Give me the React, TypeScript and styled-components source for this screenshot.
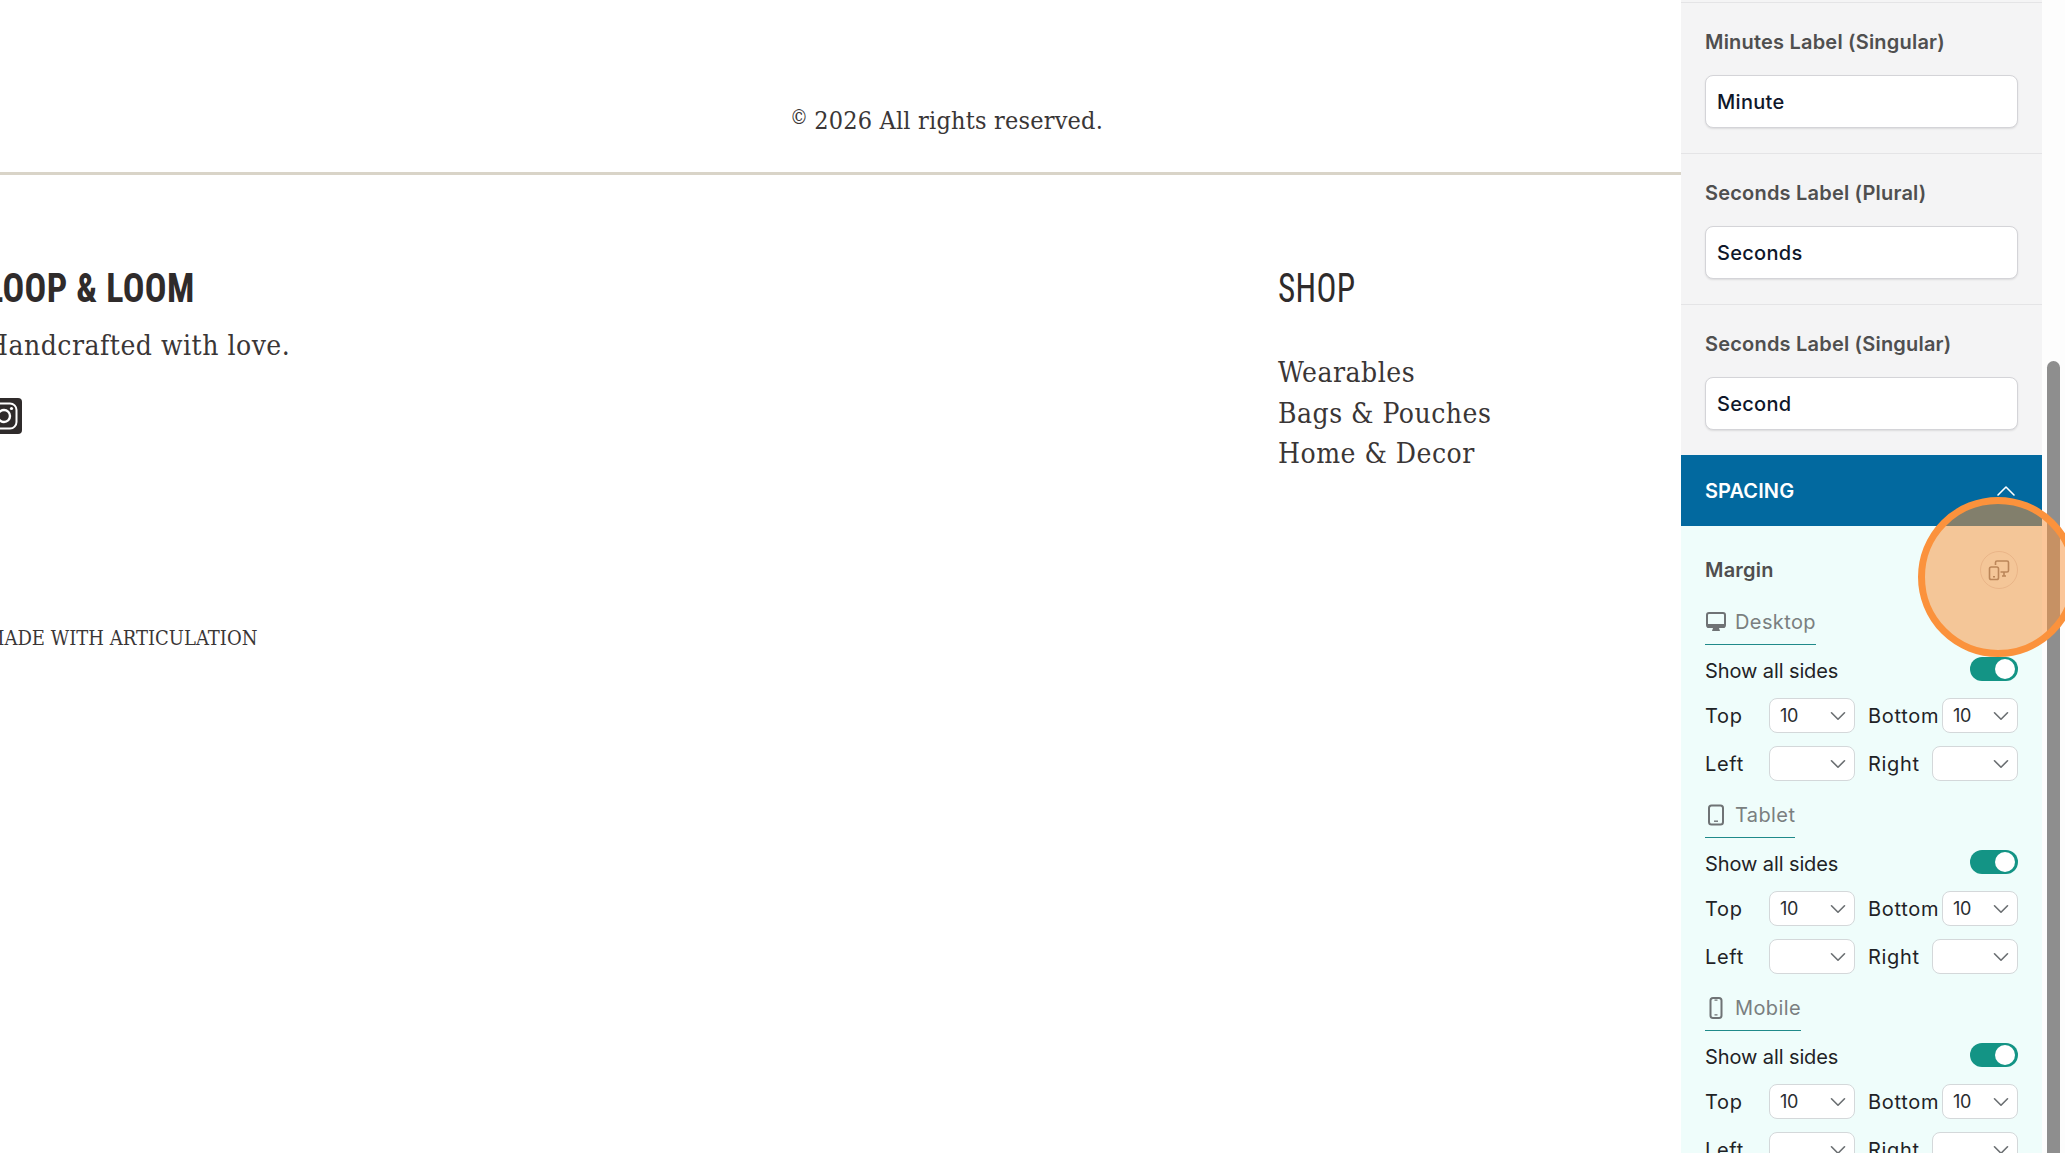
import { FC } from "react";
import styled, { createGlobalStyle } from "styled-components";
import { ChevronDown, ChevronUp } from "lucide-react";

const GlobalStyle = createGlobalStyle`
  html, body {
    margin: 0;
    height: 100%;
    background: #fff;
    overflow: hidden;
  }
  #root {
    height: 100%;
  }
`;

const Page = styled.div`
  position: relative;
  display: flex;
  width: 2065px;
  height: 1153px;
  overflow: hidden;
`;

const Main = styled.main`
  width: 1681px;
  flex-shrink: 0;
  color: #3a3636;
  font-family: "DejaVu Serif Condensed", "DejaVu Serif", serif;
`;

const CopyrightBar = styled.div`
  height: 175px;
  box-sizing: border-box;
  padding: 97px 0 0 212px;
  text-align: center;
  border-bottom: 3px solid #d9d4c8;
`;

const Copyright = styled.p`
  margin: 0;
  font-size: 25px;
  line-height: 40px;
  letter-spacing: 0.2px;
`;

const CopyrightMark = styled.span`
  font-size: 20px;
  vertical-align: 5px;
  margin-right: 6px;
`;

const Footer = styled.footer`
  display: grid;
  grid-template-columns: 1292px 1fr;
  margin-left: -14px;
  padding-top: 89px;
`;

const Brand = styled.div`
  display: flex;
  flex-direction: column;
  align-items: flex-start;
`;

const Heading = styled.h3<{ $bold?: boolean }>`
  margin: 0;
  color: #2f2b2b;
  font-family: "Roboto", "Liberation Sans", sans-serif;
  font-stretch: 75%;
  font-size: 41px;
  line-height: 48px;
  font-weight: ${(p) => (p.$bold ? 700 : 400)};
  letter-spacing: 0.4px;
  transform: scaleX(${(p) => (p.$bold ? 0.88 : 0.81)});
  transform-origin: left center;
`;

const Tagline = styled.p`
  margin: 14px 0 0;
  font-size: 28px;
  line-height: 40px;
  letter-spacing: 0.5px;
`;

const SocialLink = styled.a`
  display: block;
  margin-top: 32px;
  width: 36px;
  height: 36px;
`;

const MadeWith = styled.p`
  margin: 190px 0 0;
  font-size: 20px;
  line-height: 28px;
`;

const ShopLinks = styled.ul`
  list-style: none;
  margin: 41px 0 0;
  padding: 0;
  font-size: 28px;
  line-height: 40.5px;
  letter-spacing: 0.5px;
`;

const Sidebar = styled.aside`
  flex: 1;
  display: flex;
  background: #fdfdfd;
`;

const Panel = styled.div`
  width: 361px;
  flex-shrink: 0;
  height: 1153px;
  box-sizing: border-box;
  padding-top: 2px;
  overflow: hidden;
  background: #f4f4f5;
  font-family: "Inter", "Noto Sans", sans-serif;
`;

const ScrollTrack = styled.div`
  flex: 1;
  padding: 361px 5px 0;
`;

const ScrollThumb = styled.div`
  width: 13px;
  height: 792px;
  background: #8e8e8e;
  border-radius: 7px 7px 0 0;
`;

const TextField = styled.div`
  height: 151px;
  box-sizing: border-box;
  padding: 25px 24px 0;
  border-top: 1px solid #e4e4e6;
`;

const FieldLabel = styled.div`
  font-size: 20px;
  line-height: 28px;
  font-weight: 600;
  letter-spacing: 0.2px;
  color: #4f4f4f;
`;

const FieldInput = styled.div`
  margin-top: 19px;
  height: 53px;
  box-sizing: border-box;
  padding: 0 11px;
  display: flex;
  align-items: center;
  background: #fff;
  border: 1px solid #d4d4d8;
  border-radius: 8px;
  box-shadow: 0 1px 2px rgba(0, 0, 0, 0.1);
  font-size: 20px;
  font-weight: 500;
  letter-spacing: 0.3px;
  color: #0f172a;
`;

const SectionHeader = styled.div`
  height: 71px;
  box-sizing: border-box;
  padding: 0 20px 0 24px;
  display: flex;
  align-items: center;
  justify-content: space-between;
  background: #02699f;
  color: #fff;
  font-size: 20px;
  font-weight: 600;
  letter-spacing: 0.1px;
`;

const SectionBody = styled.div`
  padding: 0 24px;
  background: #effdfb;
`;

const MarginRow = styled.div`
  height: 65px;
  display: flex;
  align-items: flex-end;
  justify-content: space-between;
  padding-bottom: 7px;
  box-sizing: border-box;
`;

const ResponsiveButton = styled.button`
  width: 38px;
  height: 38px;
  margin-bottom: -5px;
  padding: 0;
  display: flex;
  align-items: center;
  justify-content: center;
  background: transparent;
  border: 1px solid #d8d8d8;
  border-radius: 50%;
  color: #777;
`;

const DeviceBlock = styled.section`
  height: 193px;
`;

const DeviceTab = styled.div`
  display: inline-flex;
  align-items: center;
  gap: 8px;
  height: 47px;
  margin-top: 7px;
  padding-top: 2px;
  box-sizing: border-box;
  border-bottom: 1.5px solid #1f8a8a;
  font-size: 20px;
  letter-spacing: 0.4px;
  color: #7a7f80;
`;

const ToggleRow = styled.div`
  height: 24px;
  margin-top: 12px;
  display: flex;
  align-items: flex-start;
  justify-content: space-between;
  font-size: 20px;
  line-height: 28px;
  letter-spacing: -0.1px;
  color: #1f2326;
`;

const ToggleTrack = styled.span`
  position: relative;
  display: block;
  width: 48px;
  height: 24px;
  background: #139485;
  border-radius: 12px;
`;

const ToggleKnob = styled.span`
  position: absolute;
  top: 2px;
  right: 3px;
  width: 20px;
  height: 20px;
  background: #fff;
  border-radius: 50%;
`;

const SidesGrid = styled.div`
  margin-top: 17px;
  display: grid;
  grid-template-columns: 64px 86px 13px 1fr;
  row-gap: 13px;
  align-items: center;
  font-size: 20px;
  letter-spacing: 0.7px;
  color: #1f2326;
`;

const SideCellEnd = styled.div`
  grid-column: 4;
  display: flex;
  align-items: center;
  justify-content: space-between;
`;

const SelectBox = styled.div<{ $width: number }>`
  width: ${(p) => p.$width}px;
  height: 35px;
  box-sizing: border-box;
  padding: 0 3px 0 10px;
  display: flex;
  align-items: center;
  justify-content: space-between;
  background: #fff;
  border: 1px solid #d4d8da;
  border-radius: 8px;
  font-size: 18px;
  letter-spacing: -0.4px;
  color: #2a2d30;
`;

const ClickHighlight = styled.div`
  position: absolute;
  left: 1918px;
  top: 497px;
  width: 160px;
  height: 160px;
  box-sizing: border-box;
  border: 7px solid #fb923c;
  border-radius: 50%;
  background: rgba(250, 148, 61, 0.52);
`;

const InstagramIcon: FC = () => (
  <svg width="36" height="36" viewBox="0 0 36 36">
    <rect width="36" height="36" rx="4" fill="#2f2b2b" />
    <rect x="5.5" y="5.5" width="25" height="25" rx="6.5" fill="none" stroke="#fff" strokeWidth="2" />
    <circle cx="18" cy="18" r="6" fill="none" stroke="#fff" strokeWidth="2.4" />
    <circle cx="25.5" cy="10.5" r="1.6" fill="#fff" />
  </svg>
);

const DesktopIcon: FC = () => (
  <svg width="22" height="22" viewBox="0 0 22 22">
    <rect x="2" y="2" width="18" height="14" rx="2" fill="none" stroke="#6f7375" strokeWidth="2" />
    <path d="M2 13h18v2.5a1.5 1.5 0 0 1-1.5 1.5h-15A1.5 1.5 0 0 1 2 15.5z" fill="#6f7375" />
    <path d="M8 17h6l1 3H7z" fill="#6f7375" />
  </svg>
);

const TabletIcon: FC = () => (
  <svg width="22" height="22" viewBox="0 0 22 22">
    <rect x="4" y="1.5" width="14" height="19" rx="2.5" fill="none" stroke="#6f7375" strokeWidth="2" />
    <path d="M9 17.2h4" stroke="#6f7375" strokeWidth="1.4" />
  </svg>
);

const MobileIcon: FC = () => (
  <svg width="22" height="22" viewBox="0 0 22 22">
    <rect x="5.5" y="1" width="11" height="20" rx="2.5" fill="none" stroke="#6f7375" strokeWidth="2" />
    <path d="M9.5 17.8h3M9.5 3.2h3" stroke="#6f7375" strokeWidth="1.3" />
  </svg>
);

const DevicesIcon: FC = () => (
  <svg width="22" height="22" viewBox="0 0 22 22" fill="none" stroke="currentColor" strokeWidth="1.6">
    <path d="M7.5 6V3.5A1.5 1.5 0 0 1 9 2h10a1.5 1.5 0 0 1 1.5 1.5v8A1.5 1.5 0 0 1 19 13h-6.5" />
    <path d="M14 17h4M16 13v4" />
    <rect x="1.5" y="8" width="9" height="12.5" rx="1.8" />
    <path d="M5 17.8h2" />
  </svg>
);

interface SelectProps {
  value?: string;
  width: number;
}

const Select: FC<SelectProps> = ({ value, width }) => (
  <SelectBox $width={width}>
    <span>{value}</span>
    <ChevronDown size={26} strokeWidth={1.5} color="#6b6f72" />
  </SelectBox>
);

const labelFields = [
  { label: "Minutes Label (Singular)", value: "Minute" },
  { label: "Seconds Label (Plural)", value: "Seconds" },
  { label: "Seconds Label (Singular)", value: "Second" },
];

const devices = [
  { name: "Desktop", icon: <DesktopIcon /> },
  { name: "Tablet", icon: <TabletIcon /> },
  { name: "Mobile", icon: <MobileIcon /> },
];

const App: FC = () => (
  <Page>
    <GlobalStyle />
    <Main>
      <CopyrightBar>
        <Copyright>
          <CopyrightMark>©</CopyrightMark>2026 All rights reserved.
        </Copyright>
      </CopyrightBar>
      <Footer>
        <Brand>
          <Heading $bold>LOOP &amp; LOOM</Heading>
          <Tagline>Handcrafted with love.</Tagline>
          <SocialLink aria-label="Instagram">
            <InstagramIcon />
          </SocialLink>
          <MadeWith>MADE WITH ARTICULATION</MadeWith>
        </Brand>
        <div>
          <Heading>SHOP</Heading>
          <ShopLinks>
            <li>Wearables</li>
            <li>Bags &amp; Pouches</li>
            <li>Home &amp; Decor</li>
          </ShopLinks>
        </div>
      </Footer>
    </Main>
    <Sidebar>
      <Panel>
        {labelFields.map((field) => (
          <TextField key={field.label}>
            <FieldLabel>{field.label}</FieldLabel>
            <FieldInput>{field.value}</FieldInput>
          </TextField>
        ))}
        <SectionHeader>
          SPACING
          <ChevronUp size={32} strokeWidth={1.2} />
        </SectionHeader>
        <SectionBody>
          <MarginRow>
            <FieldLabel>Margin</FieldLabel>
            <ResponsiveButton aria-label="Responsive">
              <DevicesIcon />
            </ResponsiveButton>
          </MarginRow>
          {devices.map((device) => (
            <DeviceBlock key={device.name}>
              <DeviceTab>
                {device.icon}
                {device.name}
              </DeviceTab>
              <ToggleRow>
                Show all sides
                <ToggleTrack>
                  <ToggleKnob />
                </ToggleTrack>
              </ToggleRow>
              <SidesGrid>
                <span>Top</span>
                <Select value="10" width={86} />
                <SideCellEnd>
                  <span>Bottom</span>
                  <Select value="10" width={76} />
                </SideCellEnd>
                <span>Left</span>
                <Select width={86} />
                <SideCellEnd>
                  <span>Right</span>
                  <Select width={86} />
                </SideCellEnd>
              </SidesGrid>
            </DeviceBlock>
          ))}
        </SectionBody>
      </Panel>
      <ScrollTrack>
        <ScrollThumb />
      </ScrollTrack>
    </Sidebar>
    <ClickHighlight />
  </Page>
);

export default App;
